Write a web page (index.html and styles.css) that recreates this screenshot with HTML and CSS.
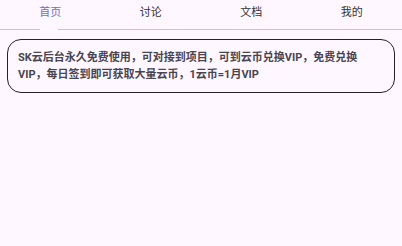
FILE: index.html
```html
<!DOCTYPE html>
<html lang="zh">
  <head>
    <meta charset="UTF-8" />
    <meta name="viewport" content="width=device-width, initial-scale=1.0" />
    <title>SK云后台</title>
    <link rel="stylesheet" href="styles.css">
  </head>
  <body>
    <div class="tabs">
      <div class="tab active">首页</div>
      <div class="tab">讨论</div>
      <div class="tab">文档</div>
      <div class="tab">我的</div>
    </div>

    <div class="content">
      <div class="notice">
        SK云后台永久免费使用，可对接到项目，可到云币兑换VIP，免费兑换VIP，每日签到即可获取大量云币，1云币=1月VIP
      </div>
    </div>
  </body>
</html>
```

FILE: styles.css
```css
body {
  margin: 0;
  background-color: #fef7ff;
  font-family: Roboto, "Noto Sans CJK SC", sans-serif;
}
.tabs {
  display: flex;
  height: 29px;
  border-bottom: 1px solid #cac4d0;
}
.tab {
  flex: 1;
  position: relative;
  text-align: center;
  font-size: 11px;
  line-height: 26px;
  color: #333;
}
.tab.active {
  color: #6b72c4;
}
.tab.active::after {
  content: "";
  position: absolute;
  left: 40px;
  width: 18px;
  bottom: -1px;
  height: 1px;
  background-color: #ffffff;
}
.content {
  padding: 9px 7px;
}
.notice {
  border: 1px solid #222;
  border-radius: 14px;
  padding: 9px 10px;
  font-size: 11px;
  font-weight: bold;
  line-height: 17px;
  color: #49454f;
}
```
